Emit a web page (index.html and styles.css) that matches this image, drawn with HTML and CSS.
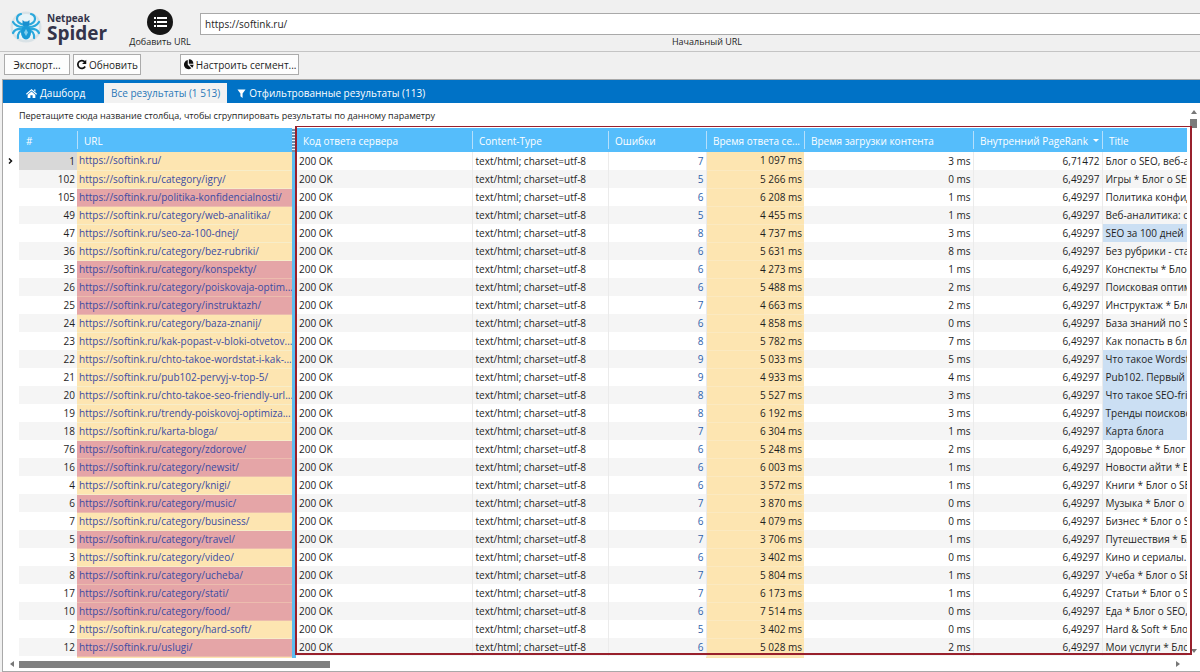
FILE: index.html
```html
<!DOCTYPE html>
<html lang="ru">
<head>
<meta charset="utf-8">
<title>Netpeak Spider</title>
<link rel="stylesheet" href="styles.css">
</head>
<body>
<div class="app">
  <header class="topbar">
    <div class="brand">
      <svg class="brand-icon" viewBox="0 0 32 32" aria-hidden="true">
        <circle cx="16" cy="16" r="15.5" fill="#d9e2e6"/>
        <circle cx="16" cy="16" r="13" fill="#e9f4f8"/>
        <g fill="none" stroke="#2ba8dc" stroke-width="2.2" stroke-linecap="round" stroke-linejoin="round">
          <path d="M14 14Q7 12 7 8T11 3M18 14q7-2 7-6T21 3"/>
          <path d="M13 16Q6 16 3 11M19 16q7 0 10-5"/>
          <path d="M13 18Q5 17 3 22M19 18q8-1 10 4"/>
          <path d="M13 19Q7 21 8 27M19 19q6 2 5 8"/>
        </g>
        <path d="M12.500 13V9l2 1.500h3l2-1.500v4l-1.500 3h-4z" fill="#1a90cf"/>
        <ellipse cx="16" cy="21.500" rx="5" ry="7" fill="#1a9ad6"/>
        <path d="M16 18l2 3.500-2 3.500-2-3.500z" fill="#7fcdee"/>
      </svg>
      <div class="brand-name"><span class="brand-small">Netpeak</span><span class="brand-big">Spider</span></div>
    </div>
    <button class="add-url" type="button">
      <svg class="add-icon" viewBox="0 0 26 26" aria-hidden="true">
        <circle cx="13" cy="13" r="13" fill="#161616"/>
        <g fill="#fff"><rect x="7" y="8" width="2" height="2"/><rect x="7" y="12" width="2" height="2"/><rect x="7" y="16" width="2" height="2"/>
        <rect x="10" y="8" width="10" height="2"/><rect x="10" y="12" width="10" height="2"/><rect x="10" y="16" width="10" height="2"/></g>
      </svg>
      <span>Добавить URL</span>
    </button>
    <div class="start-url">
      <input id="start" class="url-input" type="text" value="https://softink.ru/">
      <label for="start" class="url-label">Начальный URL</label>
    </div>
  </header>

  <div class="toolbar">
    <button class="tool export" type="button">Экспорт...</button>
    <button class="tool" type="button">
      <svg class="tool-icon" viewBox="0 0 12 12" aria-hidden="true"><path d="M9.600 3.200A4.300 4.300 0 1 0 10 8.200" fill="none" stroke="#111" stroke-width="1.900"/><path d="M11.200 .8v4.600H6.600z" fill="#111"/></svg>
      Обновить
    </button>
    <button class="tool segment" type="button">
      <svg class="tool-icon" viewBox="0 0 12 12" aria-hidden="true"><path d="M5.200 1.200v5.200l3.900 3.700A5 5 0 1 1 5.200 1.200z" fill="#111"/><path d="M6.400.4a5 5 0 0 1 4.900 4.900H6.400z" fill="#111"/><path d="M7 6.400h4.600a5 5 0 0 1-1.500 3.100z" fill="#111"/></svg>
      Настроить сегмент...
    </button>
  </div>

  <main class="panel">
    <nav class="tabs">
      <button class="tab home" type="button">
        <svg class="tab-icon" viewBox="0 0 12 12" aria-hidden="true"><path d="M6 1 12 6.400l-.8.9L6 2.800.8 7.300 0 6.400z" fill="#fff"/><path d="M6 3.700 10.200 7.300V11H7.200V8H4.800v3h-3V7.300zM8.800 1.500h1.500v2.600L8.800 2.800z" fill="#fff"/></svg>
        Дашборд
      </button>
      <button class="tab active" type="button">Все результаты (1 513)</button>
      <button class="tab" type="button">
        <svg class="tab-icon filter" viewBox="0 0 10 12" aria-hidden="true"><path d="M.5 1.500h9L6.200 6v5L3.800 9V6z" fill="#fff"/></svg>
        Отфильтрованные результаты (113)
      </button>
    </nav>

    <div class="content">
      <div class="gutter"><svg class="row-mark" viewBox="0 0 5 6" aria-hidden="true"><path d="M1 .5 3.500 3 1 5.500" fill="none" stroke="#111" stroke-width="1.500"/></svg></div>
      <div class="grid-area">
        <p class="group-hint">Перетащите сюда название столбца, чтобы сгруппировать результаты по данному параметру</p>
        <div class="grid">
          <table class="results">
            <colgroup><col class="c-num"><col class="c-url"><col class="c-split"><col class="c-code"><col class="c-type"><col class="c-err"><col class="c-resp"><col class="c-load"><col class="c-rank"><col></colgroup>
            <thead>
              <tr>
                <th>#</th><th>URL</th><th class="split-head"></th><th>Код ответа сервера</th><th>Content-Type</th><th>Ошибки</th><th>Время ответа се...</th><th>Время загрузки контента</th>
                <th>Внутренний PageRank<svg class="sort" viewBox="0 0 6 3" aria-hidden="true"><path d="M0 0h6L3 3z" fill="#fff"/></svg></th>
                <th>Title</th>
              </tr>
            </thead>
            <tbody id="rows"></tbody>
          </table>
          <div class="frame"></div>
        </div>
      </div>
      <div class="vscroll">
        <svg class="arrow-v" viewBox="0 0 6 4" aria-hidden="true"><path d="M0 4h6L3 0z" fill="#777"/></svg>
        <div class="vthumb"></div>
        <svg class="arrow-v down" viewBox="0 0 6 4" aria-hidden="true"><path d="M0 0h6L3 4z" fill="#777"/></svg>
      </div>
    </div>

    <div class="hscroll">
      <svg class="arrow-h" viewBox="0 0 4 6" aria-hidden="true"><path d="M4 0v6L0 3z" fill="#777"/></svg>
      <div class="htrack"><div class="hthumb"></div></div>
      <svg class="arrow-h" viewBox="0 0 4 6" aria-hidden="true"><path d="M0 0v6l4-3z" fill="#777"/></svg>
    </div>
  </main>
</div>
<script src="app.js"></script>
</body>
</html>
```

FILE: styles.css
```css
* { box-sizing: border-box; }
body {
  margin: 0;
  background: #f0f0f0;
  color: #1e1e1e;
  font: 10px/14px "Open Sans", "Noto Sans", sans-serif;
}
button, input { font: inherit; color: inherit; }
button { cursor: pointer; }
.app { display: flex; flex-direction: column; height: 100vh; min-height: 400px; }

.topbar {
  display: flex;
  height: 52px;
  flex: none;
  border-bottom: 1px solid #c4c4c4;
}
.brand { display: flex; width: 120px; padding: 11px 0 0 10px; gap: 5px; }
.brand-icon { width: 32px; height: 32px; }
.brand-name { display: flex; flex-direction: column; font-weight: 700; color: #34344a; }
.brand-small { font-size: 10px; line-height: 14px; }
.brand-big { font-size: 19px; line-height: 17px; }
.add-url {
  display: flex;
  flex-direction: column;
  align-items: center;
  width: 80px;
  padding: 9px 0 0;
  border: 0;
  background: none;
  font-size: 9px;
  white-space: nowrap;
}
.add-icon { width: 26px; height: 26px; }
.start-url { display: flex; flex: 1; flex-direction: column; align-items: center; padding-top: 13px; min-width: 0; }
.url-input {
  width: 100%;
  height: 22px;
  padding: 0 4px;
  border: 1px solid #a9a9a9;
  border-right: 0;
  border-radius: 0;
  background: #fff;
}
.url-label { margin-left: 14px; font-size: 9px; }

.toolbar { display: flex; flex: none; height: 27px; padding: 2px 4px; gap: 3px; }
.tool {
  display: flex;
  align-items: center;
  justify-content: center;
  gap: 2px;
  height: 21px;
  padding: 0 2px;
  border: 1px solid #ababab;
  background: #fdfdfd;
  white-space: nowrap;
}
.export { width: 66px; }
.segment { margin-left: 36px; }
.tool-icon { width: 11px; height: 11px; }

.panel {
  display: flex;
  flex: 1;
  flex-direction: column;
  min-height: 0;
  margin-left: 2px;
  border: 1px solid #a9a9a9;
  border-right: 0;
  background: #fff;
}
.tabs { display: flex; flex: none; height: 23px; padding-top: 3px; background: #0072c6; }
.tab {
  display: flex;
  align-items: center;
  gap: 3px;
  height: 20px;
  padding: 0 10px;
  border: 0;
  background: none;
  color: #fff;
  white-space: nowrap;
}
.tab.home { width: 101px; padding-left: 23px; }
.tab.active { padding: 0 7px; background: #f2f2f2; color: #2b78b8; }
.tab-icon { width: 11px; height: 11px; }
.filter { width: 9px; }

.content { display: flex; flex: 1; min-height: 0; }
.gutter { flex: none; width: 16px; padding: 55px 0 0 5px; }
.row-mark { display: block; width: 5px; height: 6px; }
.grid-area { display: flex; flex: 1; flex-direction: column; min-width: 0; }
.group-hint { margin: 0; padding: 6px 0 5px; flex: none; font-size: 9px; }
.grid { position: relative; flex: 1; min-height: 0; }
.results { width: 100%; table-layout: fixed; border-collapse: collapse; }
.c-num { width: 58px; }
.c-url { width: 215px; }
.c-split { width: 4px; }
.c-code { width: 176px; }
.c-type { width: 136px; }
.c-err { width: 98px; }
.c-resp { width: 98px; }
.c-load { width: 169px; }
.c-rank { width: 129px; }
th {
  position: relative;
  height: 24px;
  padding: 2px 0 0 7px;
  background: #55bdfb;
  color: #fff;
  font-weight: 400;
  text-align: left;
  white-space: nowrap;
  overflow: hidden;
}
th + th:not(.split-head)::before {
  content: "";
  position: absolute;
  left: 0;
  top: 3px;
  bottom: 3px;
  width: 1px;
  background: #b5dffb;
}
.split-head { padding: 0; background: repeating-linear-gradient(#e8f4fb 0 1px, #6f8fa8 1px 3px); }
.sort { width: 6px; height: 3px; margin-left: 5px; vertical-align: 3px; }
td {
  height: 18px;
  padding: 0 2px 0 3px;
  line-height: 17px;
  white-space: nowrap;
  overflow: hidden;
}
tbody tr:nth-child(even) { background: #f5f5f5; }
.num, .right { text-align: right; }
.current { background: #d8d8d8; }
.url { padding: 0 0 0 2px; border-bottom: 1px solid #f7edc9; background: #fde5b1; }
.url.bad { background: #e5a5a7; border-color: #ecbcae; }
.url a { color: #3b4ba3; text-decoration: none; }
.split { padding: 0; background: #5cbcf0; }
.code, .type, .err, .load, .rank { border-right: 1px solid #ebebeb; }
.err a { color: #2f62ab; text-decoration: none; }
.resp { background: #fde5b1; border-bottom: 1px solid #fbe9c0; }
.dup { background: #cbdff3; }
.peek td { height: 2px; line-height: 0; border-bottom: 0; }
.frame {
  position: absolute;
  left: 276px;
  right: -5px;
  top: -2px;
  bottom: 2px;
  border: 2px solid #98202c;
  border-width: 1px 2px 2px;
  pointer-events: none;
}
.vscroll { display: flex; flex: none; flex-direction: column; align-items: center; width: 13px; padding: 7px 0 4px; }
.arrow-v { width: 6px; height: 4px; }
.vthumb { width: 7px; height: 9px; margin-top: 5px; background: #7b7b7b; }
.down { margin-top: auto; }
.hscroll { display: flex; flex: none; align-items: center; height: 14px; padding: 0 20px 0 7px; gap: 5px; }
.arrow-h { width: 4px; height: 6px; }
.htrack { flex: 1; }
.hthumb { width: 27%; height: 7px; background: #808080; }
```

FILE: app.js
```js
// number, path, marked as problem, errors, response ms, load ms, title, duplicate title
const rows = [
  [1, "", 0, 7, "1 097", 3, "Блог о SEO, веб-аналитике"],
  [102, "category/igry/", 0, 5, "5 266", 0, "Игры * Блог о SEO"],
  [105, "politika-konfidencialnosti/", 1, 6, "6 208", 1, "Политика конфиденциальности"],
  [49, "category/web-analitika/", 0, 5, "4 455", 1, "Веб-аналитика: статьи"],
  [47, "seo-za-100-dnej/", 0, 8, "4 737", 3, "SEO за 100 дней", 1],
  [36, "category/bez-rubriki/", 0, 6, "5 631", 8, "Без рубрики - статьи"],
  [35, "category/konspekty/", 1, 6, "4 273", 1, "Конспекты * Блог о SEO"],
  [26, "category/poiskovaja-optim...", 1, 6, "5 488", 2, "Поисковая оптимизация"],
  [25, "category/instruktazh/", 1, 7, "4 663", 2, "Инструктаж * Блог о SEO"],
  [24, "category/baza-znanij/", 0, 6, "4 858", 0, "База знаний по SEO"],
  [23, "kak-popast-v-bloki-otvetov...", 0, 8, "5 782", 7, "Как попасть в блоки"],
  [22, "chto-takoe-wordstat-i-kak-...", 0, 9, "5 033", 5, "Что такое Wordstat", 1],
  [21, "pub102-pervyj-v-top-5/", 0, 9, "4 933", 4, "Pub102. Первый в топ-5", 1],
  [20, "chto-takoe-seo-friendly-url...", 0, 8, "5 527", 3, "Что такое SEO-friendly", 1],
  [19, "trendy-poiskovoj-optimiza...", 0, 8, "6 192", 3, "Тренды поисковой", 1],
  [18, "karta-bloga/", 0, 7, "6 304", 1, "Карта блога", 1],
  [76, "category/zdorove/", 1, 6, "5 248", 2, "Здоровье * Блог о SEO"],
  [16, "category/newsit/", 1, 6, "6 003", 1, "Новости айти * Блог"],
  [4, "category/knigi/", 0, 6, "3 572", 1, "Книги * Блог о SEO"],
  [6, "category/music/", 1, 7, "3 870", 0, "Музыка * Блог о SEO"],
  [7, "category/business/", 0, 6, "4 079", 0, "Бизнес * Блог о SEO"],
  [5, "category/travel/", 1, 7, "3 706", 1, "Путешествия * Блог"],
  [3, "category/video/", 0, 6, "3 402", 0, "Кино и сериалы. Блог"],
  [8, "category/ucheba/", 1, 7, "5 804", 1, "Учеба * Блог о SEO"],
  [17, "category/stati/", 1, 7, "6 173", 1, "Статьи * Блог о SEO"],
  [10, "category/food/", 1, 6, "7 514", 0, "Еда * Блог о SEO, веб"],
  [2, "category/hard-soft/", 0, 5, "3 402", 0, "Hard &amp; Soft * Блог"],
  [12, "uslugi/", 1, 6, "5 028", 2, "Мои услуги * Блог"]
];
const site = "https://softink.ru/";
const html = rows.map(([n, path, bad, err, resp, load, title, dup], i) => `<tr>
<td class="num${i ? "" : " current"}">${n}</td>
<td class="url${bad ? " bad" : ""}"><a href="#">${site}${path}</a></td>
<td class="split"></td>
<td class="code">200 OK</td>
<td class="type">text/html; charset=utf-8</td>
<td class="err right"><a href="#">${err}</a></td>
<td class="resp right">${resp} ms</td>
<td class="load right">${load} ms</td>
<td class="rank right">${i ? "6,49297" : "6,71472"}</td>
<td class="title${dup ? " dup" : ""}">${title}</td></tr>`).join("");
const peek = '<tr class="peek"><td></td><td class="url"></td><td class="split"></td><td></td><td></td><td></td><td class="resp"></td><td></td><td></td><td></td></tr>';
document.getElementById("rows").innerHTML = html + peek;
```
